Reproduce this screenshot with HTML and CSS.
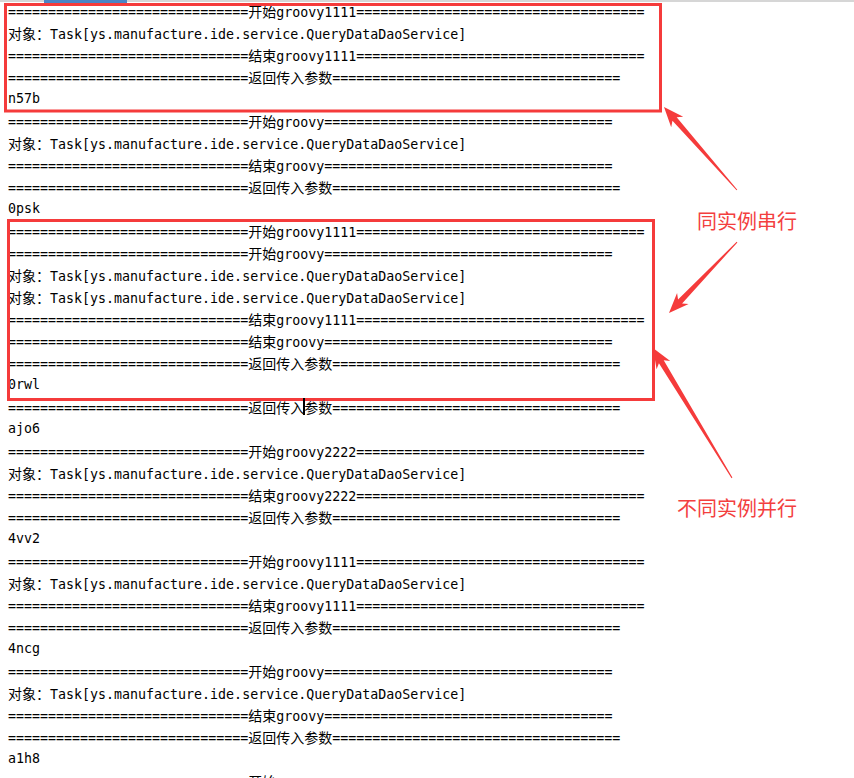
FILE: index.html
```html
<!DOCTYPE html>
<html lang="zh">
<head>
<meta charset="utf-8">
<title>log</title>
<link rel="stylesheet" href="styles.css">
</head>
<body>
<div class="topbar"><div class="tab-ind"></div></div>
<div class="log">
<div class="ln">==============================<span class="zh">开始</span>groovy1111====================================</div>
<div class="ln"><span class="zh">对象：</span>Task[ys.manufacture.ide.service.QueryDataDaoService]</div>
<div class="ln">==============================<span class="zh">结束</span>groovy1111====================================</div>
<div class="ln">==============================<span class="zh">返回传入参数</span>====================================</div>
<div class="ln">n57b</div>
<div class="ln">==============================<span class="zh">开始</span>groovy====================================</div>
<div class="ln"><span class="zh">对象：</span>Task[ys.manufacture.ide.service.QueryDataDaoService]</div>
<div class="ln">==============================<span class="zh">结束</span>groovy====================================</div>
<div class="ln">==============================<span class="zh">返回传入参数</span>====================================</div>
<div class="ln">0psk</div>
<div class="ln">==============================<span class="zh">开始</span>groovy1111====================================</div>
<div class="ln">==============================<span class="zh">开始</span>groovy====================================</div>
<div class="ln"><span class="zh">对象：</span>Task[ys.manufacture.ide.service.QueryDataDaoService]</div>
<div class="ln"><span class="zh">对象：</span>Task[ys.manufacture.ide.service.QueryDataDaoService]</div>
<div class="ln">==============================<span class="zh">结束</span>groovy1111====================================</div>
<div class="ln">==============================<span class="zh">结束</span>groovy====================================</div>
<div class="ln">==============================<span class="zh">返回传入参数</span>====================================</div>
<div class="ln">0rwl</div>
<div class="ln">==============================<span class="zh">返回传入参数</span>====================================</div>
<div class="ln">ajo6</div>
<div class="ln">==============================<span class="zh">开始</span>groovy2222====================================</div>
<div class="ln"><span class="zh">对象：</span>Task[ys.manufacture.ide.service.QueryDataDaoService]</div>
<div class="ln">==============================<span class="zh">结束</span>groovy2222====================================</div>
<div class="ln">==============================<span class="zh">返回传入参数</span>====================================</div>
<div class="ln">4vv2</div>
<div class="ln">==============================<span class="zh">开始</span>groovy1111====================================</div>
<div class="ln"><span class="zh">对象：</span>Task[ys.manufacture.ide.service.QueryDataDaoService]</div>
<div class="ln">==============================<span class="zh">结束</span>groovy1111====================================</div>
<div class="ln">==============================<span class="zh">返回传入参数</span>====================================</div>
<div class="ln">4ncg</div>
<div class="ln">==============================<span class="zh">开始</span>groovy====================================</div>
<div class="ln"><span class="zh">对象：</span>Task[ys.manufacture.ide.service.QueryDataDaoService]</div>
<div class="ln">==============================<span class="zh">结束</span>groovy====================================</div>
<div class="ln">==============================<span class="zh">返回传入参数</span>====================================</div>
<div class="ln">a1h8</div>
<div class="ln">==============================<span class="zh">开始</span>groovy====================================</div>
</div>

<svg class="overlay" width="854" height="778" viewBox="0 0 854 778" xmlns="http://www.w3.org/2000/svg">
  <rect x="5.5" y="4.5" width="655" height="106.5" fill="none" stroke="#f53b3b" stroke-width="3"/>
  <rect x="8.5" y="220.5" width="645" height="179" fill="none" stroke="#f53b3b" stroke-width="3"/>
  <g fill="#f53b3b">
    <polygon transform="translate(664 107) rotate(48.7)" points="0,0 20,-8 16,-2.8 110.5,-0.5 110.5,0.5 16,2.8 20,8"/>
    <polygon transform="translate(669 313) rotate(-46.2)" points="0,0 20,-8 16,-2.8 98.3,-0.5 98.3,0.5 16,2.8 20,8"/>
    <polygon transform="translate(653 348) rotate(58.7)" points="0,0 20,-8 16,-2.8 152,-0.5 152,0.5 16,2.8 20,8"/>
  </g>
  <rect x="303" y="398" width="2" height="17" fill="#000"/>
</svg>
<div class="note note-serial">同实例串行</div>
<div class="note note-parallel">不同实例并行</div>
</body>
</html>
```

FILE: styles.css
```css
html, body {
  margin: 0;
  padding: 0;
  background: #ffffff;
}
body {
  position: relative;
  width: 854px;
  height: 778px;
  overflow: hidden;
}
.topbar {
  position: absolute;
  top: 0;
  left: 0;
  width: 854px;
  height: 2px;
  background: #d6d6d6;
}
.tab-ind {
  margin-left: 44px;
  width: 83px;
  height: 3px;
  background: #4a85c6;
}
.log {
  padding-left: 8px;
  font-family: "DejaVu Sans Mono", "Noto Sans CJK SC", monospace;
  font-size: 13.3px;
  line-height: 22px;
  color: #000000;
}
.ln {
  height: 22px;
  white-space: pre;
}
.zh {
  font-family: "Noto Sans CJK SC", sans-serif;
  font-size: 14px;
}
.overlay {
  position: absolute;
  top: 0;
  left: 0;
  pointer-events: none;
}
.note {
  position: absolute;
  font-family: "Noto Sans CJK SC", sans-serif;
  font-size: 20px;
  line-height: 20px;
  color: #f33f3f;
  white-space: nowrap;
}
.note-serial {
  left: 697px;
  top: 211px;
}
.note-parallel {
  left: 677px;
  top: 498px;
}
```
